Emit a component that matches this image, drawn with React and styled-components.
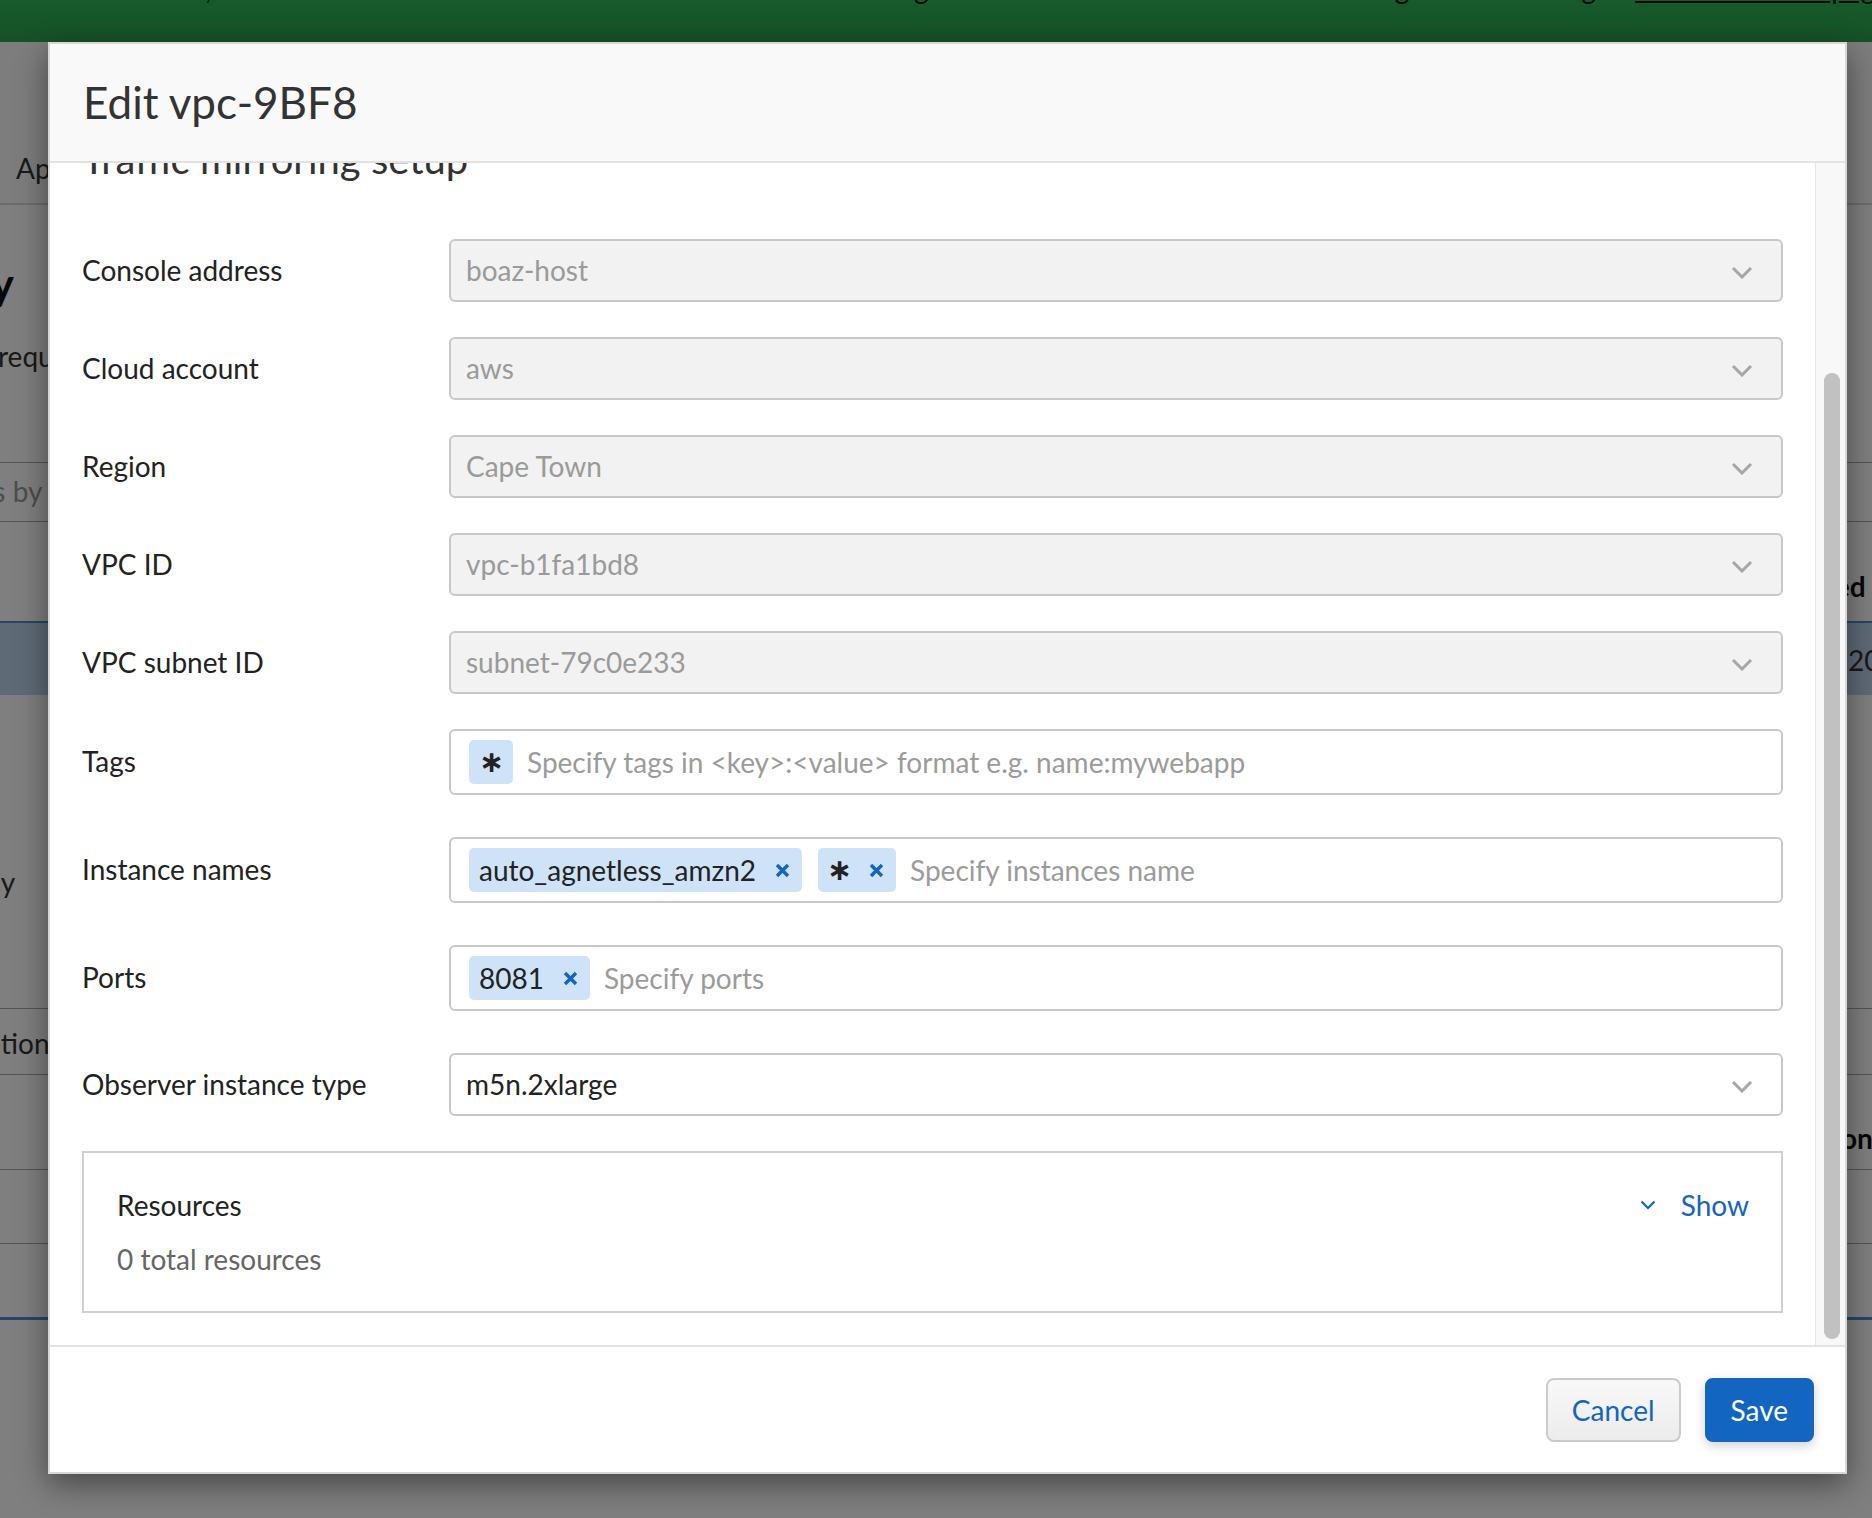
import React, { useCallback, useLayoutEffect, useRef, useState } from 'react';
import styled, { createGlobalStyle } from 'styled-components';

const GlobalStyle = createGlobalStyle`
  html, body { margin: 0; padding: 0; overflow: hidden; }
  body { font-family: Lato, "Noto Sans", sans-serif; background: #fff; }
  *, *::before, *::after { box-sizing: border-box; }
`;

const BLUE = '#1265c0';

/* ---------- page behind the dialog ---------- */
const Page = styled.div`
  position: relative;
  width: 1872px;
  height: 1518px;
  overflow: hidden;
  background: #fff;
  font-family: Lato, "Noto Sans", sans-serif;
`;

const BgPage = styled.div`
  display: flex;
  flex-direction: column;
  height: 100%;
`;

const Banner = styled.div`
  flex: none;
  height: 42px;
  overflow: hidden;
  display: flex;
  justify-content: flex-end;
  background: linear-gradient(#2fb557, #2aa54b);
`;

const BannerText = styled.p`
  flex: none;
  margin: -29px -18px 0 0;
  font-size: 28px;
  line-height: 34px;
  color: #111;
  white-space: nowrap;
`;

const BannerLink = styled.span`
  text-decoration: underline;
`;

const NavBar = styled.div`
  flex: none;
  height: 163px;
  display: flex;
  align-items: flex-end;
  padding: 0 0 18px 16px;
  border-bottom: 2px solid #d9d9d9;
  background: #fafafa;
  font-size: 28px;
  line-height: 34px;
  color: #333;
`;

const BgRow = styled.div`
  flex: none;
  height: ${p => p.$h}px;
  display: flex;
  justify-content: space-between;
  align-items: flex-start;
  padding-top: ${p => p.$pt || 0}px;
  background: ${p => p.$bg || 'transparent'};
  border-top: ${p => p.$top || 'none'};
  border-bottom: ${p => p.$bottom || 'none'};
`;

const Edge = styled.div`
  flex: none;
  width: ${p => p.$w}px;
  overflow: hidden;
  white-space: nowrap;
  display: flex;
  justify-content: ${p => (p.$end ? 'flex-end' : 'flex-start')};
`;

const EdgeText = styled.span`
  flex: none;
  margin-left: ${p => p.$shift || 0}px;
  font-size: ${p => p.$size || 28}px;
  line-height: 1.2;
  font-weight: ${p => (p.$bold ? 700 : 400)};
  color: ${p => (p.$muted ? '#9a9a9a' : p.$bold ? '#111' : '#333')};
`;

const Backdrop = styled.div`
  position: absolute;
  inset: 0;
  background: rgba(0, 0, 0, 0.5);
`;

/* ---------- dialog ---------- */
const Modal = styled.div`
  position: absolute;
  left: 48px;
  top: 42px;
  width: 1799px;
  height: 1432px;
  display: flex;
  flex-direction: column;
  background: #fff;
  border: 2px solid #d7d7d7;
  box-shadow: 0 10px 30px rgba(0, 0, 0, 0.45);
`;

const Header = styled.header`
  flex: none;
  height: 119px;
  display: flex;
  align-items: center;
  padding: 0 33px;
  background: #f9f9f9;
  border-bottom: 2px solid #e3e3e3;
`;

const Title = styled.h2`
  margin: 0;
  font-size: 44px;
  line-height: 1.2;
  font-weight: 400;
  color: #333;
`;

const BodyWrap = styled.div`
  flex: 1;
  min-height: 0;
  display: flex;
`;

const Body = styled.div`
  flex: 1;
  min-width: 0;
  overflow-y: auto;
  scrollbar-width: none;
  padding: 222px 32px 32px 32px;

  &::-webkit-scrollbar {
    display: none;
  }
`;

const ScrollTrack = styled.div`
  flex: none;
  position: relative;
  width: 30px;
  background: #f8f8f8;
  border-left: 1px solid #e4e4e4;
`;

const ScrollThumb = styled.div`
  position: absolute;
  left: 8px;
  width: 16px;
  border-radius: 8px;
  background: #c1c1c1;
`;

const SectionTitle = styled.h3`
  margin: 0 0 56px;
  font-size: 40px;
  line-height: 48px;
  font-weight: 400;
  color: #333;
`;

const Field = styled.div`
  display: grid;
  grid-template-columns: 367px 1fr;
  align-items: center;
  margin-bottom: ${p => p.$gap}px;
`;

const Label = styled.label`
  font-size: 28px;
  line-height: 1.2;
  color: #222;
`;

const SelectBox = styled.div`
  height: 63px;
  display: flex;
  align-items: center;
  justify-content: space-between;
  padding: 0 28px 0 15px;
  border: 2px solid #c8c8c8;
  border-radius: 6px;
  background: ${p => (p.$disabled ? '#f1f2f1' : '#fff')};
  color: ${p => (p.$disabled ? '#9a9a9a' : '#222')};
  font-size: 28px;
  line-height: 1.2;
`;

const ChevronSvg = styled.svg`
  flex: none;
  margin-top: 4px;
`;

const ChipField = styled.div`
  height: 66px;
  display: flex;
  align-items: center;
  gap: 14px;
  padding: 0 18px;
  border: 2px solid #c8c8c8;
  border-radius: 6px;
  background: #fff;
`;

const Chip = styled.span`
  flex: none;
  display: inline-flex;
  align-items: center;
  gap: 19px;
  height: 44px;
  padding: ${p => (p.$removable ? '0 12px 0 10px' : '0 11px')};
  border-radius: 5px;
  background: #cfe3f8;
  font-size: 28px;
  color: #222;
  white-space: nowrap;

  & + & {
    margin-left: 2px;
  }
`;

const Star = styled.span`
  display: inline-flex;
  justify-content: center;
  align-items: center;
  width: 17px;
  height: 44px;
  margin: 0 2px 0 3px;
  font-family: "DejaVu Sans", sans-serif;
  font-weight: 700;
  font-size: 30px;
  line-height: 1;
  color: #222;
`;

const RemoveSvg = styled.svg`
  flex: none;
  display: block;
`;

const ChipInput = styled.input`
  flex: 1;
  min-width: 0;
  border: none;
  outline: none;
  padding: 0;
  background: transparent;
  font-family: inherit;
  font-size: 28px;
  color: #222;

  &::placeholder {
    color: #9b9b9b;
  }
`;

const ResourcesBox = styled.section`
  border: 2px solid #d0d0d0;
  padding: 32px 32px 32px 33px;
`;

const ResourcesHead = styled.div`
  display: flex;
  justify-content: space-between;
  align-items: center;
`;

const ResourcesTitle = styled.div`
  font-size: 28px;
  line-height: 40px;
  color: #222;
`;

const ResourcesCount = styled.div`
  margin-top: 14px;
  font-size: 28px;
  line-height: 40px;
  color: #666;
`;

const ToggleButton = styled.button`
  display: inline-flex;
  align-items: center;
  gap: 25px;
  padding: 0;
  border: none;
  background: none;
  font-family: inherit;
  font-size: 28px;
  line-height: 40px;
  color: ${BLUE};
  cursor: pointer;
`;

const Footer = styled.footer`
  flex: none;
  height: 127px;
  display: flex;
  justify-content: flex-end;
  align-items: center;
  gap: 24px;
  padding: 0 31px 0 0;
  border-top: 2px solid #e3e3e3;
`;

const Button = styled.button`
  height: 64px;
  padding: 0 24px;
  border-radius: 8px;
  border: 2px solid ${p => (p.$primary ? BLUE : '#cbcbcb')};
  background: ${p => (p.$primary ? BLUE : 'linear-gradient(#f8f8f8, #ececec)')};
  color: ${p => (p.$primary ? '#fff' : BLUE)};
  box-shadow: ${p => (p.$primary ? '0 4px 12px rgba(0,0,0,0.18)' : 'none')};
  font-family: inherit;
  font-size: 28px;
  line-height: 1;
  cursor: pointer;
`;

/* ---------- pieces ---------- */
const Chevron = () => (
  <ChevronSvg width="22" height="13" viewBox="0 0 22 13" aria-hidden="true">
    <path d="M2 2 L11 11 L20 2" fill="none" stroke="#a6a6a6" strokeWidth="3" />
  </ChevronSvg>
);

const SmallChevron = () => (
  <svg width="16" height="10" viewBox="0 0 16 10" aria-hidden="true">
    <path d="M1.5 1.5 L8 8 L14.5 1.5" fill="none" stroke={BLUE} strokeWidth="2.2" />
  </svg>
);

const RemoveIcon = () => (
  <RemoveSvg width="15" height="15" viewBox="0 0 15 15" aria-hidden="true">
    <path d="M2 2 L13 13 M13 2 L2 13" fill="none" stroke={BLUE} strokeWidth="3.4" />
  </RemoveSvg>
);

const Select = ({ value, disabled }) => (
  <SelectBox $disabled={disabled}>
    <span>{value}</span>
    <Chevron />
  </SelectBox>
);

const selects = [
  ['Console address', 'boaz-host'],
  ['Cloud account', 'aws'],
  ['Region', 'Cape Town'],
  ['VPC ID', 'vpc-b1fa1bd8'],
  ['VPC subnet ID', 'subnet-79c0e233'],
];

const THUMB_INSET = 6;

export default function App() {
  const bodyRef = useRef(null);
  const [thumb, setThumb] = useState({ top: 0, height: 0 });

  const updateThumb = useCallback(() => {
    const el = bodyRef.current;
    if (!el) return;
    const track = el.clientHeight - THUMB_INSET * 2;
    const ratio = el.clientHeight / el.scrollHeight;
    setThumb({
      top: THUMB_INSET + (track * el.scrollTop) / el.scrollHeight,
      height: track * ratio,
    });
  }, []);

  useLayoutEffect(() => {
    const el = bodyRef.current;
    if (el) el.scrollTop = el.scrollHeight;
    updateThumb();
  }, [updateThumb]);

  return (
    <Page>
      <GlobalStyle />
      <BgPage>
        <Banner>
          <BannerText>
            New settings are available for AWS, Azure and GCP cloud account credentials and scan settings for these accounts can now be managed from Manage - <BannerLink>Cloud accounts page</BannerLink>
          </BannerText>
        </Banner>
        <NavBar>Apps</NavBar>
        <BgRow $h={125} $pt={52}>
          <Edge $w={14} $end>
            <EdgeText $size={44} $bold>Traffic mirroring policy</EdgeText>
          </Edge>
        </BgRow>
        <BgRow $h={70} $pt={10}>
          <Edge $w={48}>
            <EdgeText $shift={-2}>requires</EdgeText>
          </Edge>
        </BgRow>
        <BgRow $h={63} $bottom="1px solid #a8a8a8" />
        <BgRow $h={59} $pt={12} $bottom="1px solid #a8a8a8">
          <Edge $w={48}>
            <EdgeText $muted $shift={-176}>Search policies by name</EdgeText>
          </Edge>
        </BgRow>
        <BgRow $h={99} $pt={48}>
          <span />
          <Edge $w={25}>
            <EdgeText $bold $shift={-80}>Created</EdgeText>
          </Edge>
        </BgRow>
        <BgRow $h={74} $pt={21} $bg="#bcd4ec" $top="2px solid #4b8fd6">
          <span />
          <Edge $w={25}>
            <EdgeText $shift={1}>2023-06-12</EdgeText>
          </Edge>
        </BgRow>
        <BgRow $h={314} $pt={171} $bottom="1px solid #a8a8a8">
          <Edge $w={48}>
            <EdgeText $shift={-58}>Policy</EdgeText>
          </Edge>
        </BgRow>
        <BgRow $h={66} $pt={18} $bottom="1px solid #a8a8a8">
          <Edge $w={48}>
            <EdgeText $shift={-93}>Description</EdgeText>
          </Edge>
        </BgRow>
        <BgRow $h={95} $pt={47} $bottom="1px solid #a8a8a8">
          <span />
          <Edge $w={25}>
            <EdgeText $bold $shift={-60}>Region</EdgeText>
          </Edge>
        </BgRow>
        <BgRow $h={74} $bottom="1px solid #a8a8a8" />
        <BgRow $h={76} $bottom="3px solid #4b8fd6" />
      </BgPage>

      <Backdrop />

      <Modal role="dialog" aria-label="Edit vpc-9BF8">
        <Header>
          <Title>Edit vpc-9BF8</Title>
        </Header>

        <BodyWrap>
          <Body ref={bodyRef} onScroll={updateThumb}>
            <SectionTitle>Traffic mirroring setup</SectionTitle>

            {selects.map(([label, value]) => (
              <Field key={label} $gap={35}>
                <Label>{label}</Label>
                <Select value={value} disabled />
              </Field>
            ))}

            <Field $gap={42}>
              <Label>Tags</Label>
              <ChipField>
                <Chip>
                  <Star>∗</Star>
                </Chip>
                <ChipInput placeholder="Specify tags in <key>:<value> format e.g. name:mywebapp" />
              </ChipField>
            </Field>

            <Field $gap={42}>
              <Label>Instance names</Label>
              <ChipField>
                <Chip $removable>
                  auto_agnetless_amzn2
                  <RemoveIcon />
                </Chip>
                <Chip $removable>
                  <Star>∗</Star>
                  <RemoveIcon />
                </Chip>
                <ChipInput placeholder="Specify instances name" />
              </ChipField>
            </Field>

            <Field $gap={42}>
              <Label>Ports</Label>
              <ChipField>
                <Chip $removable>
                  8081
                  <RemoveIcon />
                </Chip>
                <ChipInput placeholder="Specify ports" />
              </ChipField>
            </Field>

            <Field $gap={35}>
              <Label>Observer instance type</Label>
              <Select value="m5n.2xlarge" />
            </Field>

            <ResourcesBox>
              <ResourcesHead>
                <ResourcesTitle>Resources</ResourcesTitle>
                <ToggleButton type="button">
                  <SmallChevron />
                  Show
                </ToggleButton>
              </ResourcesHead>
              <ResourcesCount>0 total resources</ResourcesCount>
            </ResourcesBox>
          </Body>
          <ScrollTrack aria-hidden="true">
            <ScrollThumb style={{ top: thumb.top, height: thumb.height }} />
          </ScrollTrack>
        </BodyWrap>

        <Footer>
          <Button type="button">Cancel</Button>
          <Button type="button" $primary>Save</Button>
        </Footer>
      </Modal>
    </Page>
  );
}
